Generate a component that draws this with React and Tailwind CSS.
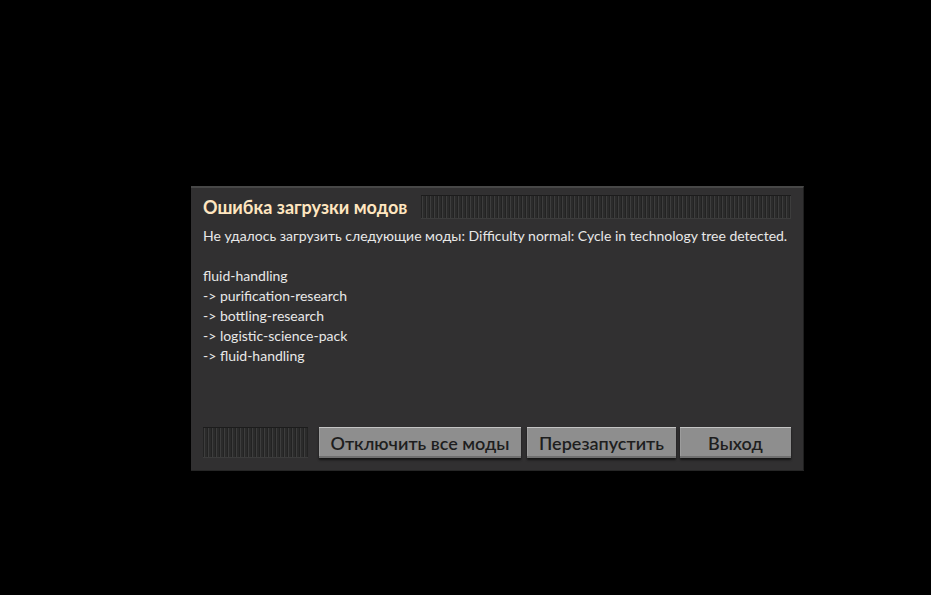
import React from 'react';

const stripes =
  'bg-[repeating-linear-gradient(90deg,#232323_0px,#232323_1px,#3d3d3d_1px,#3d3d3d_2px,#2b2b2b_2px,#2b2b2b_4px)]';

function Stripes({ className }) {
  return (
    <div className={`${stripes} shadow-[inset_0_1px_0_#1c1c1c,inset_0_-1px_0_#3c3c3c] ${className}`} />
  );
}

function Btn({ children, className }) {
  return (
    <button className={`h-[31px] bg-[#8e8e8e] text-[#1e1e1e] font-semibold text-[18px] leading-none border-t border-t-[#c4c4c4] shadow-[0_2px_2px_#141414,inset_0_-2px_0_#6f6f6f,inset_1px_0_0_#9c9c9c] ${className}`}>
      {children}
    </button>
  );
}

export default function App() {
  const chain = [
    'fluid-handling',
    '-> purification-research',
    '-> bottling-research',
    '-> logistic-science-pack',
    '-> fluid-handling',
  ];

  return (
    <div className="w-[931px] h-[595px] bg-black pl-[191px] pt-[186px] font-['Lato','Noto_Sans',sans-serif]">
      <div className="w-[613px] h-[284px] bg-[#313031] border-t-2 border-t-[#474747] border-r border-r-[#1f1f1f] shadow-[0_1px_0_#262626] flex flex-col px-[12px] pt-[7px] pb-[12px]">
        {/* Заголовок */}
        <div className="flex items-center h-[24px] gap-[14px]">
          <h1 className="text-[18px] font-bold text-[#ffe6c0] whitespace-nowrap leading-none">Ошибка загрузки модов</h1>
          <Stripes className="flex-1 h-[24px]" />
        </div>

        {/* Текст ошибки */}
        <div className="mt-[7px] text-[14px] leading-[20px] text-[#e8e8e8]">
          <p className="whitespace-nowrap">Не удалось загрузить следующие моды: Difficulty normal: Cycle in technology tree detected.</p>
          <p>&nbsp;</p>
          {chain.map((line, i) => (
            <p key={i}>{line}</p>
          ))}
        </div>

        <div className="flex-1" />

        {/* Кнопки */}
        <div className="flex items-start">
          <Stripes className="w-[105px] h-[31px] mr-[11px]" />
          <Btn className="w-[202px] mr-[6px]">Отключить все моды</Btn>
          <Btn className="w-[149px] mr-[4px]">Перезапустить</Btn>
          <Btn className="w-[111px]">Выход</Btn>
        </div>
      </div>
    </div>
  );
}
